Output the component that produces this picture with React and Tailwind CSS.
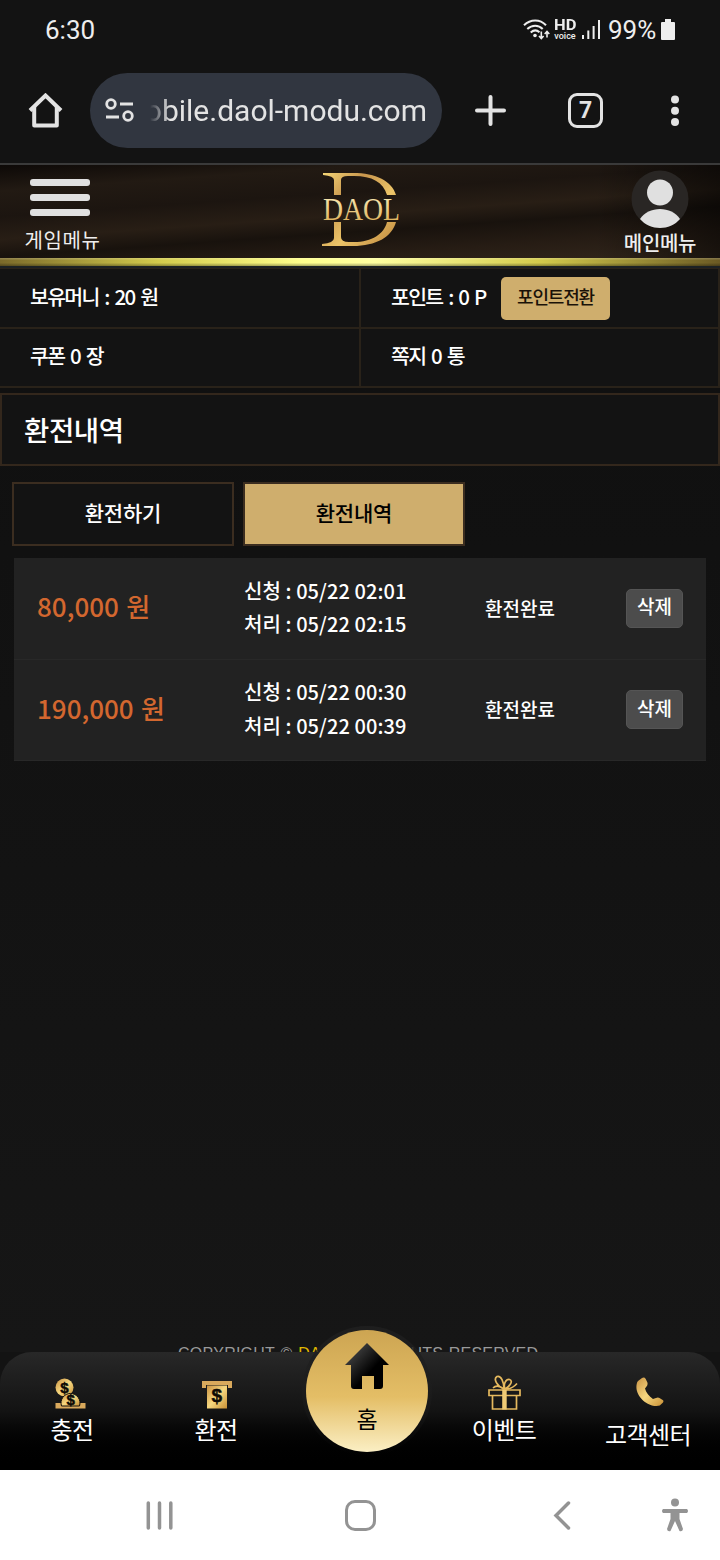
import { clsx } from "clsx";

const HISTORY = [
  { id: 1, amount: "80,000 원", requested: "05/22 02:01", processed: "05/22 02:15", status: "환전완료" },
  { id: 2, amount: "190,000 원", requested: "05/22 00:30", processed: "05/22 00:39", status: "환전완료" },
];

function WifiIcon() {
  return (
    <svg width="27" height="22" viewBox="0 0 27 22" fill="none" stroke="#eee" strokeWidth="2">
      <path d="M1 6.2C7.5-.2 17-.2 23 6.2" />
      <path d="M4.3 10C9 5.600 15.500 5.600 19.700 10" />
      <path d="M7.700 13.400C10.500 11 14 11 16.500 13.200" />
      <circle cx="12" cy="16.500" r="1.800" fill="#eee" stroke="none" />
      <path d="M18.300 12.500V19M16 17l2.300 2.500L20.600 17M24 18.500V13M21.700 15L24 12.500 26.300 15" strokeWidth="1.600" />
    </svg>
  );
}

function StatusBar() {
  return (
    <div className="flex h-[60px] items-center justify-between pl-[45px] pr-[45px] font-['Roboto',sans-serif] text-[26px] text-[#eee]">
      <span className="leading-none">6:30</span>
      <div className="flex items-center">
        <WifiIcon />
        <div className="ml-[4px] flex w-[22px] flex-col items-center pb-px">
          <span className="origin-center scale-x-110 text-[15px] font-bold leading-[13px]">HD</span>
          <span className="text-[9px] font-medium leading-[8px]">voice</span>
        </div>
        <svg className="ml-[6px]" width="18" height="20" viewBox="0 0 18 20" fill="#eee">
          <rect x="0" y="15" width="2" height="4" />
          <rect x="5.300" y="10.500" width="2" height="8.500" />
          <rect x="10.600" y="6" width="2" height="13" />
          <rect x="16" y="0" width="2" height="19" />
        </svg>
        <span className="ml-[8px] w-[49px] whitespace-nowrap leading-none">99%</span>
        <svg className="ml-[4px]" width="14" height="22" viewBox="0 0 14 22" fill="#eee">
          <path d="M4 0h6v3h3q1 0 1 1v16q0 1-1 1H1q-1 0-1-1V4q0-1 1-1h3z" />
        </svg>
      </div>
    </div>
  );
}

function BrowserBar() {
  return (
    <div className="flex h-[103px] items-center pb-[2px] pl-[28px] text-[#e3e3e3]">
      <svg width="35" height="36" viewBox="0 0 35 36" fill="none" stroke="currentColor" strokeWidth="4">
        <path d="M2 17.500L17.500 2.500 33 17.500" />
        <path d="M6.200 14V32.500H28.800V14" strokeLinejoin="round" />
      </svg>
      <div className="ml-[27px] flex h-[75px] w-[352px] items-center rounded-full bg-[#313640] pl-[15px]">
        <svg width="29" height="25" viewBox="0 0 29 25" fill="none" stroke="currentColor" strokeWidth="2.800">
          <circle cx="6" cy="6" r="4.300" />
          <path d="M15 6h13M1 19h13" />
          <circle cx="23" cy="18" r="4.300" />
        </svg>
        <div className="ml-[16px] flex w-[277px] justify-end overflow-hidden whitespace-nowrap font-['Roboto',sans-serif] text-[30px] leading-[40px] [mask-image:linear-gradient(to_right,transparent,black_20px)]">
          mobile.daol-modu.com
        </div>
      </div>
      <svg className="ml-[33px]" width="31" height="31" viewBox="0 0 31 31" stroke="currentColor" strokeWidth="4" strokeLinecap="round">
        <path d="M15.500 2v27M2 15.500h27" />
      </svg>
      <div className="ml-[62px] flex size-[35px] items-center justify-center rounded-[9px] border-[3.500px] border-[#e3e3e3] font-['Roboto',sans-serif] text-[23px] font-bold leading-none">
        7
      </div>
      <svg className="ml-[68px]" width="8" height="32" viewBox="0 0 8 32" fill="currentColor">
        <circle cx="4" cy="4.500" r="4" />
        <circle cx="4" cy="15.800" r="4" />
        <circle cx="4" cy="27" r="4" />
      </svg>
    </div>
  );
}

function Logo() {
  return (
    <svg width="80" height="76" viewBox="0 0 80 76">
      <defs>
        <linearGradient id="logo" x1="0" y1="0" x2="1" y2="1">
          <stop offset="0" stopColor="#f5d778" />
          <stop offset=".3" stopColor="#c8964d" />
          <stop offset=".6" stopColor="#ecc468" />
          <stop offset="1" stopColor="#bd863d" />
        </linearGradient>
        <linearGradient id="logoText" x1="0" y1="0" x2="0" y2="1">
          <stop offset="0" stopColor="#fdf4c6" />
          <stop offset="1" stopColor="#d9a94d" />
        </linearGradient>
      </defs>
      <path
        fill="url(#logo)"
        d="M1 1H31C54 1 70 9 74 23H65C61 10 50 4 32 4H26Q19 4 19 8V23H12V8Q12 4 1 3ZM12 50H19V65Q19 70 27 70H32C50 70 62 62 65 50H74C70 65 54 74 31 74H0V72Q12 71 12 66Z"
      />
      <text
        x="1"
        y="47.500"
        textLength="77"
        lengthAdjust="spacingAndGlyphs"
        fill="url(#logoText)"
        className="font-['Liberation_Serif',serif] text-[32px]"
      >
        DAOL
      </text>
    </svg>
  );
}

function SiteHeader() {
  return (
    <header className="border-t-2 border-[#3a3a3a]">
      <div className="flex h-[93px] justify-between bg-[linear-gradient(176deg,#0d0907_0%,#221a13_18%,#1c1510_36%,#281e15_52%,#18120d_64%,#261c14_80%,#33271c_100%)]">
        <div className="flex w-[125px] flex-col items-center pt-[14px]">
          <div className="mr-[5px] flex w-[60px] flex-col gap-[8px]">
            <div className="h-[7px] rounded-[3px] bg-[#e0e0e0]" />
            <div className="h-[7px] rounded-[3px] bg-[#e0e0e0]" />
            <div className="h-[7px] rounded-[3px] bg-[#e0e0e0]" />
          </div>
          <span className="mt-[12px] whitespace-nowrap text-[20px] leading-[24px] tracking-[0.6px] text-[#eee]">게임메뉴</span>
        </div>
        <div className="pl-[4px] pt-[7px]">
          <Logo />
        </div>
        <div className="flex w-[125px] flex-col items-center bg-gradient-to-r from-transparent to-black/50 pl-[5px] pt-[5px]">
          <svg width="58" height="60" viewBox="0 0 58 60">
            <circle cx="29" cy="29" r="28.500" fill="#292624" />
            <circle cx="29" cy="22.500" r="13" fill="#e0e0e0" />
            <path d="M9 49C17 35.500 41 35.500 49 49C39 61 19 61 9 49Z" fill="#e0e0e0" />
          </svg>
          <span className="mt-[1px] whitespace-nowrap text-[20px] font-medium leading-[24px] tracking-[-0.3px] text-[#eee]">메인메뉴</span>
        </div>
      </div>
      <div className="h-[8px] bg-[linear-gradient(to_bottom,#ffffff33,transparent_30%,transparent_60%,#00000055),linear-gradient(to_right,#7b6a2a,#d3cb4c_22%,#ffff8c_42%,#ffffa0_52%,#d3cb4c_75%,#6b5a24)]" />
      <div className="h-[2px] bg-[#1c2124]" />
    </header>
  );
}

function InfoCell({ className, children }) {
  return (
    <div className={clsx("flex items-center border-b-2 border-r-2 border-[#292219] pb-[3px] [word-spacing:2.8px]", className)}>
      {children}
    </div>
  );
}

function AccountInfo() {
  return (
    <div className="grid h-[120px] grid-cols-[361px_359px] grid-rows-2 border-t border-[#292219] text-[20.5px] font-medium tracking-[-1.7px] text-white">
      <InfoCell className="pl-[30px]">보유머니 : 20 원</InfoCell>
      <InfoCell className="pl-[30px]">
        <span className="w-[96px] whitespace-nowrap">포인트 : 0 P</span>
        <button className="-mb-[4px] ml-[14px] h-[43px] w-[109px] rounded-[5px] bg-[#cfae6d] pb-[3px] text-[18px] tracking-[-1.2px] text-[#1a1208]">
          포인트전환
        </button>
      </InfoCell>
      <InfoCell className="pl-[30px]">쿠폰 0 장</InfoCell>
      <InfoCell className="pl-[30px]">쪽지 0 통</InfoCell>
    </div>
  );
}

function Tab({ label, active }) {
  return (
    <button
      className={clsx(
        "h-[64px] w-[222px] border-2 border-[#3b2d20] pb-[3px] text-[21px] font-medium tracking-[-0.2px]",
        active ? "bg-[#cfae6d] text-black" : "bg-[#131313] text-white"
      )}
    >
      {label}
    </button>
  );
}

function HistoryRow({ row }) {
  return (
    <div className="flex h-[101.5px] items-center border-b border-[#282828] pl-[23px] text-white">
      <div className="w-[207px] whitespace-nowrap pb-[5px] text-[26px] font-medium text-[#d3672f] [word-spacing:1.5px]">{row.amount}</div>
      <div className="w-[241px] whitespace-nowrap pb-[2px] text-[20px] font-medium leading-[33.5px] tracking-[0.07px]">
        <p>신청 : {row.requested}</p>
        <p>처리 : {row.processed}</p>
      </div>
      <div className="w-[141px] pb-px text-[19px] font-medium">{row.status}</div>
      <button className="h-[39px] w-[57px] rounded-[5px] border border-[#555] bg-[#4c4c4c] pb-[4px] text-[19px] font-medium">
        삭제
      </button>
    </div>
  );
}

function GoldDefs() {
  return (
    <defs>
      <linearGradient id="gold" x1="0" y1="0" x2="1" y2="1">
        <stop offset="0" stopColor="#c89243" />
        <stop offset=".5" stopColor="#f6d77f" />
        <stop offset="1" stopColor="#c78f35" />
      </linearGradient>
    </defs>
  );
}

function DepositIcon() {
  return (
    <svg className="mr-[3px]" width="31" height="31" viewBox="0 0 31 31">
      <GoldDefs />
      <circle cx="9.500" cy="9.500" r="9" fill="url(#gold)" />
      <path d="M.5 25H6V27H25V25H30.500V30.500H.5Z" fill="#d9a95c" />
      <path d="M6.500 28A9.500 9.500 0 1 1 24.500 28Z" fill="url(#gold)" stroke="#15110c" />
      <g fill="#0d0a05" stroke="#0d0a05" strokeWidth=".5" className="font-['Liberation_Sans',sans-serif] text-[15px] font-bold">
        <text x="5.300" y="14.500">$</text>
        <text x="11.400" y="27">$</text>
      </g>
    </svg>
  );
}

function WithdrawIcon() {
  return (
    <svg className="ml-[2px]" width="30" height="28" viewBox="0 0 30 28">
      <path d="M0 0H30V7H26V4H4V7H0Z" fill="#d9a95c" />
      <path d="M5 4.500H25V27.500H5Z" fill="url(#gold)" />
      <text x="9.500" y="21" fill="#0d0a05" stroke="#0d0a05" strokeWidth=".5" className="font-['Liberation_Sans',sans-serif] text-[19px] font-bold">
        $
      </text>
    </svg>
  );
}

function GiftIcon() {
  return (
    <svg width="33" height="35" viewBox="0 0 33 35" fill="none" stroke="#e5b95e" strokeWidth="1.700">
      <path d="M1 15H32V20.500H1ZM4.500 21V34H28.500V21" />
      <path d="M14.200 14.500h4.500v20h-4.500z" fill="#f0cb75" stroke="none" />
      <path d="M16 14C9 11 5 4 9 1.500C13 0 16 7 16 14ZM17 14C15 9 18 4 21.500 4.500C26 6 21 12 17 14ZM16 14Q9 9 5 13M18 14Q24 14 29 8.500" />
    </svg>
  );
}

function PhoneIcon() {
  return (
    <svg className="ml-[3px]" width="28" height="30" viewBox="0 0 28 30">
      <path
        fill="url(#gold)"
        d="M2 4L6 .9Q8.500-.2 9.700 2L11.400 5.500Q12 8 10.500 9.500L9 11.500C10 15.500 13 19.500 17 22L20 21Q22 20 23.500 21L26.700 23Q28 24 27 25.500L23.800 28.500C14 31.500-2 20 .7 7Q1 5 2 4Z"
      />
    </svg>
  );
}

function NavItem({ icon, label, className }) {
  return (
    <div className={clsx("flex flex-col items-center", className)}>
      {icon}
      <span className="whitespace-nowrap text-[24px] leading-[30px] tracking-[-0.6px] text-white">{label}</span>
    </div>
  );
}

function BottomNav() {
  return (
    <nav className="relative grid h-[118px] grid-cols-5 rounded-t-[32px] bg-gradient-to-b from-[#282828] via-[#131313] to-black">
      <NavItem className="gap-[5px] pt-[26px]" icon={<DepositIcon />} label="충전" />
      <NavItem className="gap-[5px] pt-[29px]" icon={<WithdrawIcon />} label="환전" />
      <div className="absolute left-[302px] top-[-26px] flex size-[130px] items-center justify-center rounded-full bg-gradient-to-b from-[#1e1e1e] to-transparent">
        <div className="flex size-[122px] flex-col items-center rounded-full bg-[linear-gradient(to_bottom,#cda552,#e4be66_55%,#fbefc4)] pt-[12px] text-black">
          <svg width="46" height="48" viewBox="0 0 46 48">
            <defs>
              <linearGradient id="house" x1="0" y1="0" x2="1" y2="1">
                <stop offset=".2" stopColor="#3c3c3c" />
                <stop offset=".6" stopColor="#000" />
              </linearGradient>
            </defs>
            <path d="M23 1L45 23H39V44Q39 47 36 47H30V34H18V47H10Q7 47 7 44V23H1Z" fill="url(#house)" />
          </svg>
          <span className="mt-[13px] text-[23px] leading-[30px]">홈</span>
        </div>
      </div>
      <NavItem className="col-start-4 gap-[4px] pt-[23px]" icon={<GiftIcon />} label="이벤트" />
      <NavItem className="gap-[12px] pt-[25px]" icon={<PhoneIcon />} label="고객센터" />
    </nav>
  );
}

function SystemNav() {
  return (
    <div className="flex h-[90px] items-center bg-white pl-[146px] text-[#939393]">
      <svg width="28" height="30" viewBox="0 0 28 30" stroke="currentColor" strokeWidth="3.500" strokeLinecap="round">
        <path d="M2.300 3v25M13.500 3v25M24.800 3v25" />
      </svg>
      <div className="ml-[171px] size-[31px] rounded-[10px] border-[3.500px] border-[#939393]" />
      <svg className="ml-[177px]" width="18" height="29" viewBox="0 0 18 29" fill="none" stroke="currentColor" strokeWidth="3.500" strokeLinecap="round">
        <path d="M15.500 2L3 14.500 15.500 27" />
      </svg>
      <svg className="ml-[90px]" width="28" height="34" viewBox="0 0 28 34" fill="currentColor">
        <circle cx="14" cy="4.500" r="4" />
        <path d="M2 11H26Q28 13 26 15H18.500V21L22 31Q21.500 34 18.500 33L14 23 9.500 33Q6.500 34 6 31L9.500 21V15H2Q0 13 2 11Z" />
      </svg>
    </div>
  );
}

export default function App() {
  return (
    <div className="flex h-[1560px] w-[720px] flex-col bg-[#131313] font-['Noto_Sans_CJK_KR',sans-serif]">
      <StatusBar />
      <BrowserBar />
      <SiteHeader />
      <AccountInfo />
      <main className="flex-1 overflow-hidden bg-gradient-to-b from-[#101010] to-[#161616] pt-[5px]">
        <h1 className="h-[73px] border-2 border-[#33271c] bg-[#131313] pl-[22px] text-[27.5px] font-medium leading-[69px] tracking-[-0.4px] text-white">
          환전내역
        </h1>
        <div className="mt-[16px] flex gap-[9px] pl-[12px]">
          <Tab label="환전하기" />
          <Tab label="환전내역" active />
        </div>
        <section className="ml-[14px] mt-[12px] w-[692px] bg-[#222]">
          {HISTORY.map((row) => (
            <HistoryRow key={row.id} row={row} />
          ))}
        </section>
        <footer className="mt-[584px] whitespace-nowrap pl-[178px] font-['Liberation_Sans',sans-serif] text-[16px] leading-[18px] tracking-[0.2px] text-[#999] [word-spacing:1.2px]">
          COPYRIGHT © <span className="text-[#e0b800]">DAOL</span> ALL RIGHTS RESERVED
        </footer>
      </main>
      <BottomNav />
      <SystemNav />
    </div>
  );
}
